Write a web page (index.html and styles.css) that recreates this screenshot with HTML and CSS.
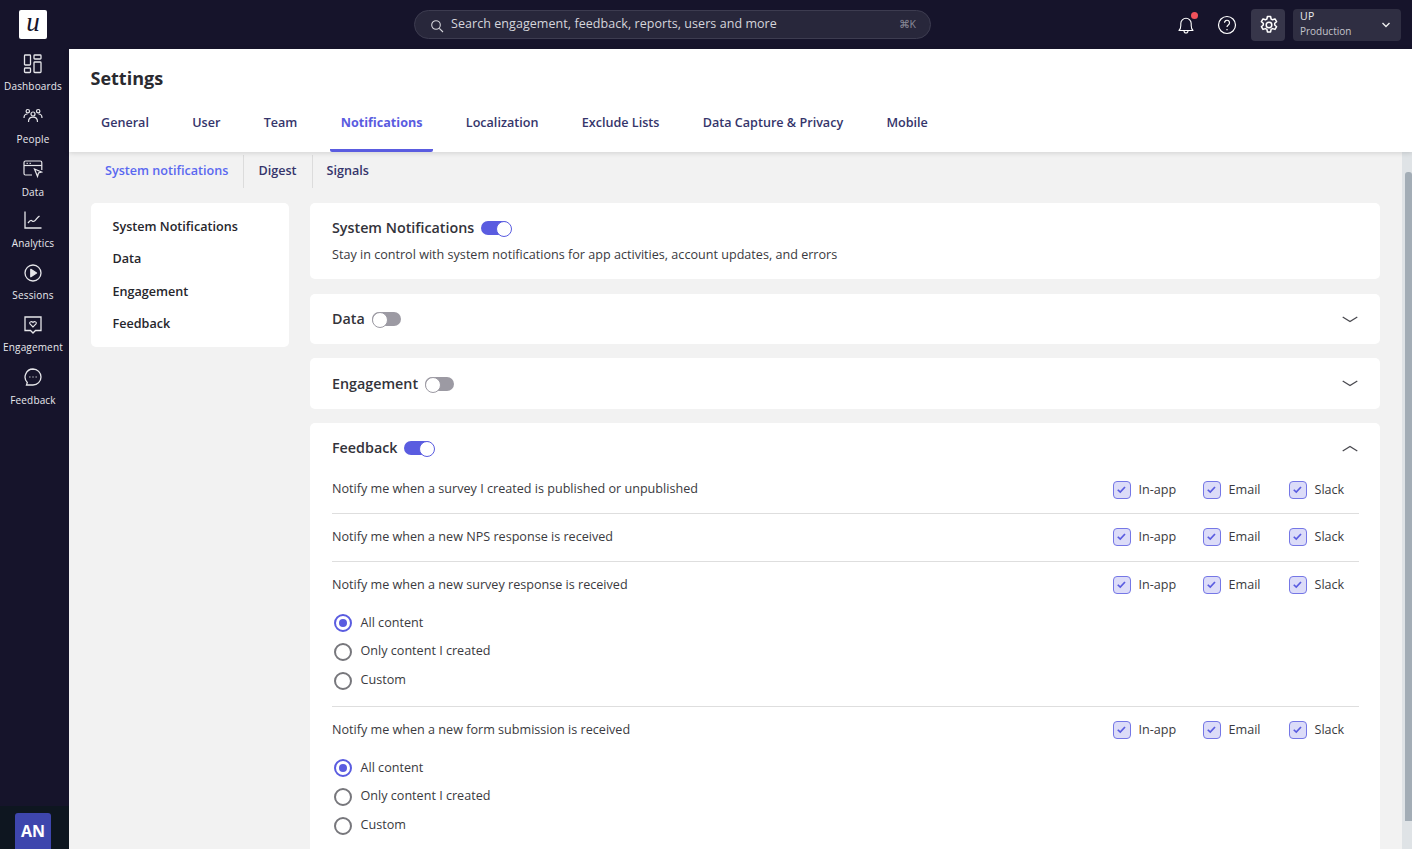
FILE: index.html
```html
<!DOCTYPE html>
<html lang="en">
<head>
<meta charset="utf-8">
<title>Settings</title>
<link rel="stylesheet" href="styles.css">
</head>
<body>
<div class="app">
  <aside class="sidebar">
    <div class="logo-wrap"><div class="logo">u</div></div>
    <nav class="side-nav">
      <a class="side-item"><svg class="side-icon" viewBox="0 0 20 20" fill="none" stroke="currentColor" stroke-width="1.3"><rect x="1.5" y="1" width="6" height="10" rx=".8"/><rect x="1.5" y="14" width="6" height="4.5" rx=".8"/><rect x="11" y="1" width="7" height="4" rx=".8"/><rect x="11" y="8" width="7" height="10.5" rx=".8"/></svg><span>Dashboards</span></a>
      <a class="side-item"><svg class="side-icon" viewBox="0 0 20 20" fill="none" stroke="currentColor" stroke-width="1.2"><circle cx="10" cy="8" r="2"/><circle cx="4.8" cy="5.2" r="1.7"/><circle cx="15.2" cy="5.2" r="1.7"/><path d="M5.5 16c0-3.2 2-4.8 4.5-4.8s4.5 1.600 4.500 4.800"/><path d="M1 12c0-2.500 1.500-4 3.500-4"/><path d="M19 12c0-2.500-1.500-4-3.500-4"/></svg><span>People</span></a>
      <a class="side-item"><svg class="side-icon" viewBox="0 0 20 20" fill="none" stroke="currentColor" stroke-width="1.2"><path d="M9 16H2.500A1.500 1.500 0 0 1 1 14.500v-11A1.500 1.500 0 0 1 2.500 2h14.800A1.500 1.500 0 0 1 18.800 3.500V11"/><path d="M1 6.500h17.800"/><path d="M3.500 4.300h1.500M6.500 4.300h1.500" stroke-width="1"/><path d="M11.500 10l7 3-3 1-1 3.500z"/></svg><span>Data</span></a>
      <a class="side-item"><svg class="side-icon" viewBox="0 0 20 20" fill="none" stroke="currentColor" stroke-width="1.3"><path d="M2 1.500V18h16.500"/><path d="M5 13c1.500-2 2.500-3 3.500-2.500s1.500 1.500 3 .5 2.500-3.500 5-5"/></svg><span>Analytics</span></a>
      <a class="side-item"><svg class="side-icon" viewBox="0 0 20 20" fill="none" stroke="currentColor" stroke-width="1.3"><circle cx="10" cy="10" r="8"/><path d="M7.800 6.300l5.700 3.700-5.700 3.700z" fill="currentColor" stroke-linejoin="round"/></svg><span>Sessions</span></a>
      <a class="side-item"><svg class="side-icon" viewBox="0 0 20 20" fill="none" stroke="currentColor" stroke-width="1.3"><path d="M2 2h16v13.500h-5.500L10 18l-2.500-2.500H2z"/><path d="M10 12l-3-3c-1.300-1.700 1.500-3.500 3-1.500 1.500-2 4.300-.2 3 1.500z" stroke-width="1.100"/></svg><span>Engagement</span></a>
      <a class="side-item"><svg class="side-icon" viewBox="0 0 20 20" fill="none" stroke="currentColor" stroke-width="1.3"><path d="M10 2a8 8 0 0 1 0 16H3.500l.8-2.500A8 8 0 0 1 10 2z"/><path d="M6.500 10h.8M9.600 10h.8M12.700 10h.8" stroke-width="1.400"/></svg><span>Feedback</span></a>
    </nav>
    <div class="side-foot"><div class="avatar">AN</div></div>
  </aside>
  <div class="right">
    <header class="topbar">
      <div class="search">
        <svg class="search-icon" viewBox="0 0 14 14" fill="none" stroke="currentColor" stroke-width="1.100"><circle cx="6" cy="6" r="4.300"/><path d="M9.300 9.300l3.700 3.700"/></svg>
        <span class="search-text">Search engagement, feedback, reports, users and more</span>
        <span class="search-key">⌘K</span>
      </div>
      <div class="top-actions">
        <span class="top-icon bell"><svg viewBox="0 0 20 20" fill="none" stroke="currentColor" stroke-width="1.100" width="20" height="20"><path d="M3 15.500c1.300-1.200 1.800-2.500 1.800-5V8.500a5.200 5.200 0 0 1 10.400 0v2c0 2.500.5 3.800 1.800 5z" stroke-linejoin="round"/><path d="M8 15.800c0 3 4 3 4 0"/></svg><i class="dot"></i></span>
        <span class="top-icon help"><svg viewBox="0 0 20 20" fill="none" stroke="currentColor" stroke-width="1.200" width="20" height="20"><circle cx="10" cy="10" r="8.500"/><path d="M7.500 7.800a2.500 2.500 0 1 1 3.800 2.100c-.9.600-1.300 1-1.300 2.100"/><path d="M10 14v1.300"/></svg></span>
        <span class="gear-box"><svg viewBox="0 0 20 20" fill="none" stroke="currentColor" stroke-width="1.500" width="20" height="20"><circle cx="10" cy="10" r="2.800"/><path d="M8.400 1.500h3.200l.5 2.500 1.500.8 2.400-.9 1.600 2.800-1.900 1.600v1.700l1.900 1.700-1.600 2.700-2.400-.8-1.500.8-.5 2.500H8.400l-.5-2.500-1.500-.8-2.400.8-1.600-2.700 1.900-1.700V8.300L2.400 6.700 4 3.900l2.400.9 1.500-.8z" stroke-linejoin="round"/></svg></span>
        <div class="env"><div class="env-text"><div class="env-name">UP</div><div class="env-sub">Production</div></div><svg class="env-chev" viewBox="0 0 10 6" fill="none" stroke="currentColor" stroke-width="1.400"><path d="M1.500 1l3.500 3.500L8.500 1"/></svg></div>
      </div>
    </header>
    <main class="main">
      <section class="page-head">
        <h1 class="title">Settings</h1>
        <nav class="tabs">
          <a class="tab">General</a><a class="tab">User</a><a class="tab">Team</a><a class="tab active">Notifications</a><a class="tab">Localization</a><a class="tab">Exclude Lists</a><a class="tab">Data Capture &amp; Privacy</a><a class="tab">Mobile</a>
        </nav>
      </section>
      <div class="scroller">
        <div class="content">
          <nav class="subtabs"><a class="subtab on">System notifications</a><a class="subtab">Digest</a><a class="subtab">Signals</a></nav>
          <div class="columns">
            <aside class="anchor-card"><a>System Notifications</a><a>Data</a><a>Engagement</a><a>Feedback</a></aside>
            <div class="cards">
              <section class="card card-intro">
                <div class="card-title"><h2>System Notifications</h2><span class="switch on"></span></div>
                <p class="intro">Stay in control with system notifications for app activities, account updates, and errors</p>
              </section>
              <section class="card card-closed c-data">
                <div class="card-title"><h2>Data</h2><span class="switch"></span></div>
                <svg class="chev" viewBox="0 0 16 7" fill="none" stroke="currentColor" stroke-width="1.300"><path d="M.7 1l7.300 4.500L15.300 1"/></svg>
              </section>
              <section class="card card-closed c-eng">
                <div class="card-title"><h2>Engagement</h2><span class="switch"></span></div>
                <svg class="chev" viewBox="0 0 16 7" fill="none" stroke="currentColor" stroke-width="1.300"><path d="M.7 1l7.300 4.500L15.300 1"/></svg>
              </section>
              <section class="card card-open">
                <div class="open-head">
                  <div class="card-title"><h2>Feedback</h2><span class="switch on"></span></div>
                  <svg class="chev" viewBox="0 0 16 7" fill="none" stroke="currentColor" stroke-width="1.300"><path d="M.7 6l7.300-4.500L15.300 6"/></svg>
                </div>
                <div class="row r1">
                  <div class="row-main"><span>Notify me when a survey I created is published or unpublished</span>
                    <div class="checks"><label class="chk c1"><i class="box"><svg viewBox="0 0 18 18" fill="none" stroke="currentColor" stroke-width="2"><path d="M4.500 9.300l3 2.900L13.200 6"/></svg></i>In-app</label><label class="chk c2"><i class="box"><svg viewBox="0 0 18 18" fill="none" stroke="currentColor" stroke-width="2"><path d="M4.500 9.300l3 2.900L13.200 6"/></svg></i><span>Email</span></label><label class="chk c3"><i class="box"><svg viewBox="0 0 18 18" fill="none" stroke="currentColor" stroke-width="2"><path d="M4.500 9.300l3 2.900L13.200 6"/></svg></i>Slack</label></div>
                  </div>
                </div>
                <div class="row r2">
                  <div class="row-main"><span>Notify me when a new NPS response is received</span>
                    <div class="checks"><label class="chk c1"><i class="box"><svg viewBox="0 0 18 18" fill="none" stroke="currentColor" stroke-width="2"><path d="M4.500 9.300l3 2.900L13.200 6"/></svg></i>In-app</label><label class="chk c2"><i class="box"><svg viewBox="0 0 18 18" fill="none" stroke="currentColor" stroke-width="2"><path d="M4.500 9.300l3 2.900L13.200 6"/></svg></i><span>Email</span></label><label class="chk c3"><i class="box"><svg viewBox="0 0 18 18" fill="none" stroke="currentColor" stroke-width="2"><path d="M4.500 9.300l3 2.900L13.200 6"/></svg></i>Slack</label></div>
                  </div>
                </div>
                <div class="row r3">
                  <div class="row-main"><span>Notify me when a new survey response is received</span>
                    <div class="checks"><label class="chk c1"><i class="box"><svg viewBox="0 0 18 18" fill="none" stroke="currentColor" stroke-width="2"><path d="M4.500 9.300l3 2.900L13.200 6"/></svg></i>In-app</label><label class="chk c2"><i class="box"><svg viewBox="0 0 18 18" fill="none" stroke="currentColor" stroke-width="2"><path d="M4.500 9.300l3 2.900L13.200 6"/></svg></i><span>Email</span></label><label class="chk c3"><i class="box"><svg viewBox="0 0 18 18" fill="none" stroke="currentColor" stroke-width="2"><path d="M4.500 9.300l3 2.900L13.200 6"/></svg></i>Slack</label></div>
                  </div>
                  <div class="radios"><label class="radio on"><i></i>All content</label><label class="radio"><i></i>Only content I created</label><label class="radio"><i></i>Custom</label></div>
                </div>
                <div class="row r4">
                  <div class="row-main"><span>Notify me when a new form submission is received</span>
                    <div class="checks"><label class="chk c1"><i class="box"><svg viewBox="0 0 18 18" fill="none" stroke="currentColor" stroke-width="2"><path d="M4.500 9.300l3 2.900L13.200 6"/></svg></i>In-app</label><label class="chk c2"><i class="box"><svg viewBox="0 0 18 18" fill="none" stroke="currentColor" stroke-width="2"><path d="M4.500 9.300l3 2.900L13.200 6"/></svg></i><span>Email</span></label><label class="chk c3"><i class="box"><svg viewBox="0 0 18 18" fill="none" stroke="currentColor" stroke-width="2"><path d="M4.500 9.300l3 2.900L13.200 6"/></svg></i>Slack</label></div>
                  </div>
                  <div class="radios"><label class="radio on"><i></i>All content</label><label class="radio"><i></i>Only content I created</label><label class="radio"><i></i>Custom</label></div>
                </div>
              </section>
            </div>
          </div>
        </div>
        <div class="scrollbar"><div class="thumb"></div></div>
      </div>
    </main>
  </div>
</div>
</body>
</html>
```

FILE: styles.css
```css
* { box-sizing: border-box; }
html, body { margin: 0; height: 100%; overflow: hidden; }
body { font-family: "Open Sans", sans-serif; color: #2b2b33; background: #f2f2f2; }
h1, h2, p { margin: 0; }
.app { display: flex; height: 100vh; }

.sidebar { width: 69px; flex: none; background: #16142b; display: flex; flex-direction: column; color: #fff; }
.logo-wrap { height: 49px; padding: 10px 0 0 19px; }
.logo { width: 28px; height: 29px; background: #fff; border-radius: 2px; color: #16142b; font-family: "Liberation Serif", serif; font-style: italic; font-size: 27px; line-height: 25px; text-align: center; }
.side-nav { flex: 1; display: flex; flex-direction: column; padding: 5px 3px 0 0; }
.side-item { height: 52px; display: flex; flex-direction: column; align-items: center; font-size: 10px; line-height: 14px; letter-spacing: .15px; color: #e9e9ee; white-space: nowrap; }
.side-icon { width: 20px; height: 20px; margin-bottom: 5px; color: #e6e6ea; flex: none; }
.side-item:nth-child(2) { height: 53px; }
.side-item:nth-child(4) { height: 53px; }
.side-item:nth-child(3) { height: 51px; }
.side-item:nth-child(2) .side-icon,
.side-item:nth-child(3) .side-icon,
.side-item:nth-child(4) .side-icon,
.side-item:nth-child(7) .side-icon { margin-bottom: 6px; }
.side-foot { height: 43px; background: #0e1620; padding: 7px 0 0 15px; }
.avatar { width: 36px; height: 36px; background: #3e46ad; border-radius: 3px 3px 0 0; color: #fff; font-weight: 700; font-size: 16px; line-height: 36px; text-align: center; }

.right { flex: 1; min-width: 0; display: flex; flex-direction: column; }
.topbar { height: 49px; flex: none; background: #16142b; position: relative; display: flex; align-items: center; justify-content: flex-end; padding-right: 11px; }
.search { position: absolute; left: 345px; top: 10px; width: 517px; height: 29px; border: 1px solid #3d3c50; border-radius: 15px; background: #28273b; display: flex; align-items: center; padding: 0 14px 0 15px; color: #d5d5db; font-size: 12.500px; }
.search-icon { width: 14px; height: 14px; margin-right: 7px; margin-top: 2px; flex: none; }
.search-text { flex: 1; letter-spacing: .06px; padding-bottom: 2px; }
.search-key { font-size: 10.500px; color: #8a8a97; padding-bottom: 2px; }

.top-actions { display: flex; align-items: center; color: #fff; }
.top-icon { width: 20px; height: 20px; position: relative; display: block; }
.top-icon svg { display: block; }
.bell { margin-right: 21px; }
.dot { position: absolute; right: -2px; top: -3px; width: 7px; height: 7px; border-radius: 50%; background: #f0525b; }
.gear-box { width: 34px; height: 32px; margin-left: 14px; padding-left: 1px; border-radius: 4px; background: #37364a; display: flex; align-items: center; justify-content: center; }
.env { width: 108px; height: 32px; margin-left: 8px; background: #2f2e42; border-radius: 4px; padding: 0 10px 0 7px; display: flex; align-items: center; justify-content: space-between; }
.env-text { padding-bottom: 2px; }
.env-name { font-size: 10.500px; line-height: 15px; color: #e9e9ee; letter-spacing: .3px; }
.env-sub { font-size: 10px; line-height: 15px; color: #c4c4cc; }
.env-chev { width: 10px; height: 6px; color: #eee; }

.main { flex: 1; min-height: 0; display: flex; flex-direction: column; position: relative; }
.page-head { background: #fff; height: 103px; flex: none; position: relative; z-index: 2; box-shadow: 0 1px 5px rgba(0,0,0,.14); padding: 16px 0 0 21.500px; }
.title { font-size: 18px; line-height: 27px; font-weight: 700; color: #2a2a30; }
.tabs { display: flex; margin-top: 18px; }
.tab { display: block; height: 42px; padding: 4px 10.500px 0; margin-right: 22.300px; font-size: 12.600px; line-height: 18px; font-weight: 600; color: #35356b; white-space: nowrap; }
.tab.active { color: #5a5ce0; font-weight: 700; border-bottom: 3px solid #5a5ce0; border-radius: 0 0 2px 2px; }

.scroller { flex: 1; min-height: 0; display: flex; background: #f2f2f2; }
.content { flex: 1; min-width: 0; overflow: hidden; padding-left: 22px; }
.scrollbar { width: 10px; flex: none; background: #dfe3e6; padding: 20px 0 28px 3px; }
.thumb { height: 100%; background: #a3adb6; border-radius: 3px 3px 0 0; }

.subtabs { display: flex; height: 36px; padding-top: 3px; }
.subtab { display: block; height: 33px; padding: 7px 15px 0 14px; border-right: 1px solid #dcdcdc; font-size: 12.600px; line-height: 18px; font-weight: 600; color: #35356b; white-space: nowrap; }
.subtab:last-child { border-right: 0; }
.subtab.on { color: #5a68f0; }

.columns { display: flex; align-items: flex-start; padding-top: 15px; }
.anchor-card { width: 198px; flex: none; height: 144px; background: #fff; border-radius: 5px; padding: 15px 0 0 21.500px; display: flex; flex-direction: column; }
.anchor-card a { display: block; height: 32.300px; font-size: 12.600px; line-height: 18px; font-weight: 600; color: #26262c; }
.cards { margin-left: 21px; width: 1070px; flex: none; display: flex; flex-direction: column; }
.card { background: #fff; border-radius: 5px; padding: 0 21px 0 22px; }
.card-title { display: flex; align-items: center; }
.card-title h2 { font-size: 14.300px; line-height: 20px; font-weight: 600; color: #33333a; }
.switch { width: 29px; height: 14px; margin-left: 7px; border-radius: 7px; background: #9c9aa3; position: relative; display: block; }
.switch::after { content: ""; position: absolute; left: 0; top: 0; width: 14px; height: 14px; border-radius: 50%; background: #fff; border: 1px solid #9c9aa3; }
.switch.on { background: #5a5ce0; }
.switch.on::after { left: 15px; border-color: #5a5ce0; }

.card-intro { height: 76px; padding-top: 15px; margin-bottom: 15px; }
.intro { margin-top: 8px; font-size: 12.600px; line-height: 18px; color: #3a3a40; }
.card-closed { display: flex; align-items: center; justify-content: space-between; }
.c-data { height: 50px; margin-bottom: 14px; }
.c-eng { height: 51px; margin-bottom: 14px; }
.chev { width: 16px; height: 7px; color: #4a4a50; margin-right: 1px; }
.card-open { padding-top: 15px; height: 500px; }
.open-head { display: flex; align-items: center; justify-content: space-between; height: 20px; }

.row { border-bottom: 1px solid #dedede; font-size: 12.600px; line-height: 18px; color: #3a3a40; }
.row:last-child { border-bottom: 0; }
.r1 { padding-top: 22px; height: 56px; }
.r2 { padding-top: 14px; height: 48px; }
.r3 { padding-top: 14px; height: 145px; }
.r4 { padding-top: 14px; }
.row-main { display: flex; justify-content: space-between; align-items: flex-start; }
.checks { display: flex; margin-right: 14.500px; }
.r1 .checks { margin-top: 1px; }
.chk { display: flex; align-items: center; height: 18px; white-space: nowrap; }
.c1 { width: 90px; }
.c2 { width: 86px; }
.c3 { width: 56px; }
.box { width: 18px; height: 18px; margin-right: 8px; border: 1.500px solid #7577e6; border-radius: 4px; background: #dcdcf8; color: #5a5ce0; display: block; flex: none; }
.box svg { display: block; width: 15px; height: 15px; }

.radios { padding-top: 13px; display: flex; flex-direction: column; }
.radio { display: flex; align-items: center; height: 29px; padding-left: 2px; }
.radio:first-child { padding-top: 2px; }
.radio i { width: 18px; height: 18px; margin: 2px 8.500px 0 0; border-radius: 50%; border: 2px solid #77777c; display: block; flex: none; position: relative; }
.radio:first-child i { margin-top: 0; }
.radio.on i { border-color: #5a5ce0; }
.radio.on i::after { content: ""; position: absolute; left: 3px; top: 3px; width: 8px; height: 8px; border-radius: 50%; background: #5a5ce0; }
```
